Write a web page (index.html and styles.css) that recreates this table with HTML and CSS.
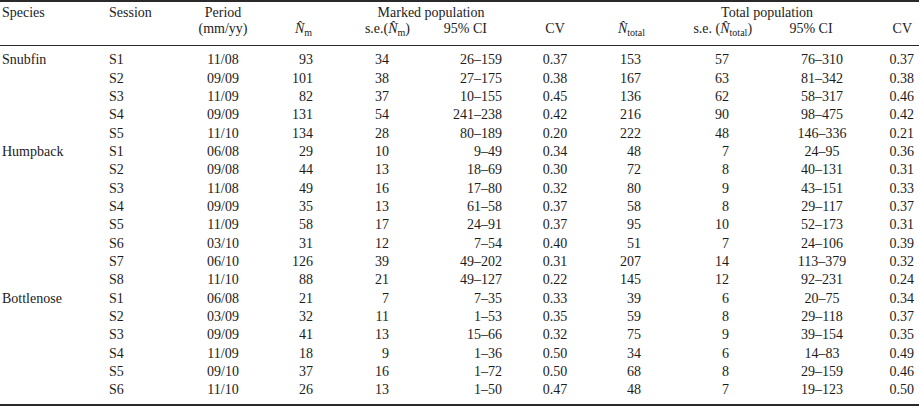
FILE: index.html
```html
<!DOCTYPE html>
<html>
<head>
<meta charset="utf-8">
<link rel="stylesheet" href="styles.css">
</head>
<body>
<div class="sheet">
<table class="tbl">
<colgroup>
<col class="w1"><col class="w2"><col class="w3"><col class="w4"><col class="w5"><col class="w6"><col class="w7"><col class="w8"><col class="w9"><col class="w10"><col class="w11">
</colgroup>
<thead>
<tr class="h1">
<th class="c1">Species</th><th class="c2">Session</th><th class="c3">Period</th>
<th colspan="4" class="grp-m">Marked population</th>
<th colspan="4" class="grp-t">Total population</th>
</tr>
<tr class="h2">
<th class="c1"></th><th class="c2"></th><th class="c3">(mm/yy)</th>
<th class="c4"><span class="n">N&#770;</span><span class="sub">m</span></th>
<th class="c5">s.e.(<span class="n">N&#770;</span><span class="sub">m</span>)</th>
<th class="c6">95% CI</th>
<th class="c7">CV</th>
<th class="c8"><span class="n">N&#770;</span><span class="sub">total</span></th>
<th class="c9">s.e. (<span class="n">N&#770;</span><span class="sub">total</span>)</th>
<th class="c10">95% CI</th>
<th class="c11">CV</th>
</tr>
</thead>
<tbody>
<tr class="first"><td class="c1">Snubfin</td><td class="c2">S1</td><td class="c3">11/08</td><td class="c4">93</td><td class="c5">34</td><td class="c6">26–159</td><td class="c7">0.37</td><td class="c8">153</td><td class="c9">57</td><td class="c10">76–310</td><td class="c11">0.37</td></tr>
<tr><td class="c1"></td><td class="c2">S2</td><td class="c3">09/09</td><td class="c4">101</td><td class="c5">38</td><td class="c6">27–175</td><td class="c7">0.38</td><td class="c8">167</td><td class="c9">63</td><td class="c10">81–342</td><td class="c11">0.38</td></tr>
<tr><td class="c1"></td><td class="c2">S3</td><td class="c3">11/09</td><td class="c4">82</td><td class="c5">37</td><td class="c6">10–155</td><td class="c7">0.45</td><td class="c8">136</td><td class="c9">62</td><td class="c10">58–317</td><td class="c11">0.46</td></tr>
<tr><td class="c1"></td><td class="c2">S4</td><td class="c3">09/09</td><td class="c4">131</td><td class="c5">54</td><td class="c6">241–238</td><td class="c7">0.42</td><td class="c8">216</td><td class="c9">90</td><td class="c10">98–475</td><td class="c11">0.42</td></tr>
<tr><td class="c1"></td><td class="c2">S5</td><td class="c3">11/10</td><td class="c4">134</td><td class="c5">28</td><td class="c6">80–189</td><td class="c7">0.20</td><td class="c8">222</td><td class="c9">48</td><td class="c10">146–336</td><td class="c11">0.21</td></tr>
<tr><td class="c1">Humpback</td><td class="c2">S1</td><td class="c3">06/08</td><td class="c4">29</td><td class="c5">10</td><td class="c6">9–49</td><td class="c7">0.34</td><td class="c8">48</td><td class="c9">7</td><td class="c10">24–95</td><td class="c11">0.36</td></tr>
<tr><td class="c1"></td><td class="c2">S2</td><td class="c3">09/08</td><td class="c4">44</td><td class="c5">13</td><td class="c6">18–69</td><td class="c7">0.30</td><td class="c8">72</td><td class="c9">8</td><td class="c10">40–131</td><td class="c11">0.31</td></tr>
<tr><td class="c1"></td><td class="c2">S3</td><td class="c3">11/08</td><td class="c4">49</td><td class="c5">16</td><td class="c6">17–80</td><td class="c7">0.32</td><td class="c8">80</td><td class="c9">9</td><td class="c10">43–151</td><td class="c11">0.33</td></tr>
<tr><td class="c1"></td><td class="c2">S4</td><td class="c3">09/09</td><td class="c4">35</td><td class="c5">13</td><td class="c6">61–58</td><td class="c7">0.37</td><td class="c8">58</td><td class="c9">8</td><td class="c10">29–117</td><td class="c11">0.37</td></tr>
<tr><td class="c1"></td><td class="c2">S5</td><td class="c3">11/09</td><td class="c4">58</td><td class="c5">17</td><td class="c6">24–91</td><td class="c7">0.37</td><td class="c8">95</td><td class="c9">10</td><td class="c10">52–173</td><td class="c11">0.31</td></tr>
<tr><td class="c1"></td><td class="c2">S6</td><td class="c3">03/10</td><td class="c4">31</td><td class="c5">12</td><td class="c6">7–54</td><td class="c7">0.40</td><td class="c8">51</td><td class="c9">7</td><td class="c10">24–106</td><td class="c11">0.39</td></tr>
<tr><td class="c1"></td><td class="c2">S7</td><td class="c3">06/10</td><td class="c4">126</td><td class="c5">39</td><td class="c6">49–202</td><td class="c7">0.31</td><td class="c8">207</td><td class="c9">14</td><td class="c10">113–379</td><td class="c11">0.32</td></tr>
<tr><td class="c1"></td><td class="c2">S8</td><td class="c3">11/10</td><td class="c4">88</td><td class="c5">21</td><td class="c6">49–127</td><td class="c7">0.22</td><td class="c8">145</td><td class="c9">12</td><td class="c10">92–231</td><td class="c11">0.24</td></tr>
<tr><td class="c1">Bottlenose</td><td class="c2">S1</td><td class="c3">06/08</td><td class="c4">21</td><td class="c5">7</td><td class="c6">7–35</td><td class="c7">0.33</td><td class="c8">39</td><td class="c9">6</td><td class="c10">20–75</td><td class="c11">0.34</td></tr>
<tr><td class="c1"></td><td class="c2">S2</td><td class="c3">03/09</td><td class="c4">32</td><td class="c5">11</td><td class="c6">1–53</td><td class="c7">0.35</td><td class="c8">59</td><td class="c9">8</td><td class="c10">29–118</td><td class="c11">0.37</td></tr>
<tr><td class="c1"></td><td class="c2">S3</td><td class="c3">09/09</td><td class="c4">41</td><td class="c5">13</td><td class="c6">15–66</td><td class="c7">0.32</td><td class="c8">75</td><td class="c9">9</td><td class="c10">39–154</td><td class="c11">0.35</td></tr>
<tr><td class="c1"></td><td class="c2">S4</td><td class="c3">11/09</td><td class="c4">18</td><td class="c5">9</td><td class="c6">1–36</td><td class="c7">0.50</td><td class="c8">34</td><td class="c9">6</td><td class="c10">14–83</td><td class="c11">0.49</td></tr>
<tr><td class="c1"></td><td class="c2">S5</td><td class="c3">09/10</td><td class="c4">37</td><td class="c5">16</td><td class="c6">1–72</td><td class="c7">0.50</td><td class="c8">68</td><td class="c9">8</td><td class="c10">29–159</td><td class="c11">0.46</td></tr>
<tr class="last"><td class="c1"></td><td class="c2">S6</td><td class="c3">11/10</td><td class="c4">26</td><td class="c5">13</td><td class="c6">1–50</td><td class="c7">0.47</td><td class="c8">48</td><td class="c9">7</td><td class="c10">19–123</td><td class="c11">0.50</td></tr>
</tbody>
</table>
</div>
</body>
</html>
```
FILE: styles.css
```css
html, body {
  margin: 0;
  padding: 0;
  background: #ffffff;
}
body {
  font-family: "Liberation Serif", "Times New Roman", serif;
  font-size: 14px;
  color: #1c1c1c;
  width: 919px;
}
.sheet {
  border-top: 2px solid #2a2a2a;
  border-bottom: 2px solid #2a2a2a;
}
.tbl {
  width: 919px;
  table-layout: fixed;
  border-collapse: separate;
  border-spacing: 0;
}
.w1 { width: 106px; }
.w2 { width: 74px; }
.w3 { width: 86px; }
.w4 { width: 64px; }
.w5 { width: 90px; }
.w6 { width: 100px; }
.w7 { width: 70px; }
.w8 { width: 70px; }
.w9 { width: 110px; }
.w10 { width: 100px; }
.w11 { width: 49px; }

th, td {
  padding: 0;
  font-weight: normal;
  white-space: nowrap;
  vertical-align: top;
}
thead th {
  line-height: 16px;
}
.h1 th { padding-top: 2.6px; }
.h2 th {
  padding-bottom: 7.4px;
  border-bottom: 1px solid #2a2a2a;
}
td { line-height: 18.33px; }
.first td { padding-top: 5.5px; }
.last td { padding-bottom: 4px; }

.c1 { text-align: left; padding-left: 2px; }
.c2 { text-align: left; padding-left: 3px; }
.c3 { text-align: center; }
.c4 { text-align: right; padding-right: 17px; }
.c5 { text-align: right; padding-right: 31px; }
.c6 { text-align: right; padding-right: 18px; }
.c7 { text-align: center; }
.c8 { text-align: right; padding-right: 19px; }
.c9 { text-align: right; padding-right: 41px; }
.c10 { text-align: center; padding-left: 4px; }
.c11 { text-align: right; padding-right: 5px; }

thead .c4 { padding-right: 18px; }
thead .c5 { padding-right: 10px; }
thead .c6 { padding-right: 33px; }
thead .c8 { padding-right: 15px; }
thead .c9 { padding-right: 18px; }
thead .c10 { padding-left: 0; padding-right: 18px; }
thead .c11 { padding-right: 7px; }

.grp-m { text-align: center; padding-left: 6px; }
.grp-t { text-align: center; padding-left: 25px; }

.n { font-style: italic; }
.sub {
  font-size: 10px;
  line-height: 1;
  vertical-align: -3px;
}
```
